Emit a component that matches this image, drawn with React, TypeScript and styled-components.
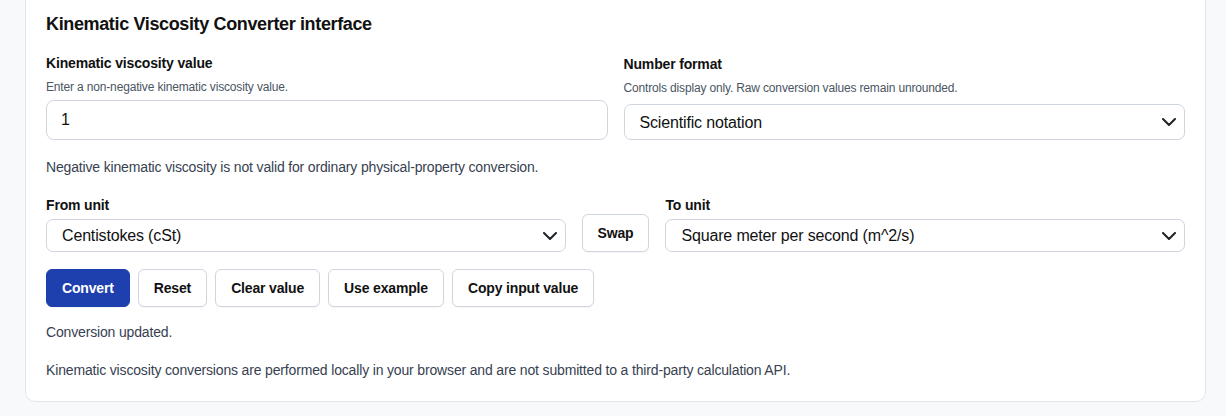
import React, { useState } from "react";
import styled, { createGlobalStyle } from "styled-components";

const GlobalStyle = createGlobalStyle`
  html, body {
    margin: 0;
    padding: 0;
    background: #f8f9fb;
    font-family: "Liberation Sans", Arial, sans-serif;
    letter-spacing: -0.01em;
    color: #111827;
  }
  * {
    box-sizing: border-box;
  }
`;

const units = [
  "Centistokes (cSt)",
  "Stokes (St)",
  "Square meter per second (m^2/s)",
  "Square millimeter per second (mm^2/s)",
  "Square foot per second (ft^2/s)",
];

const Chevron: React.FC = () => (
  <ChevronSvg viewBox="0 0 14 8" width="14" height="8">
    <path
      d="M1 1l6 6 6-6"
      fill="none"
      stroke="#1f2328"
      strokeWidth="2"
      strokeLinecap="round"
      strokeLinejoin="round"
    />
  </ChevronSvg>
);

type SelectProps = {
  value: string;
  options: string[];
  height: number;
  onChange: (v: string) => void;
};

const SelectBox: React.FC<SelectProps> = ({ value, options, height, onChange }) => (
  <SelectWrap>
    <StyledSelect
      $height={height}
      value={value}
      onChange={(e) => onChange(e.target.value)}
    >
      {options.map((o) => (
        <option key={o}>{o}</option>
      ))}
    </StyledSelect>
    <Chevron />
  </SelectWrap>
);

export default function App() {
  const [value, setValue] = useState("1");
  const [format, setFormat] = useState("Scientific notation");
  const [from, setFrom] = useState(units[0]);
  const [to, setTo] = useState(units[2]);

  const swap = () => {
    setFrom(to);
    setTo(from);
  };

  return (
    <Page>
      <GlobalStyle />
      <Card>
        <Title>Kinematic Viscosity Converter interface</Title>

        <TopGrid>
          <Field>
            <Label>Kinematic viscosity value</Label>
            <Help $gap={5}>Enter a non-negative kinematic viscosity value.</Help>
            <TextInput value={value} onChange={(e) => setValue(e.target.value)} />
          </Field>
          <Field>
            <Label>Number format</Label>
            <Help $gap={8}>
              Controls display only. Raw conversion values remain unrounded.
            </Help>
            <SelectBox
              value={format}
              height={36}
              options={["Scientific notation", "Fixed decimals", "Plain number"]}
              onChange={setFormat}
            />
          </Field>
        </TopGrid>

        <Note>
          Negative kinematic viscosity is not valid for ordinary physical-property
          conversion.
        </Note>

        <UnitGrid>
          <Field>
            <Label $gap={5}>From unit</Label>
            <SelectBox value={from} height={33} options={units} onChange={setFrom} />
          </Field>
          <Button onClick={swap}>Swap</Button>
          <Field>
            <Label $gap={5}>To unit</Label>
            <SelectBox value={to} height={33} options={units} onChange={setTo} />
          </Field>
        </UnitGrid>

        <Actions>
          <Button $primary>Convert</Button>
          <Button onClick={() => setValue("1")}>Reset</Button>
          <Button onClick={() => setValue("")}>Clear value</Button>
          <Button onClick={() => setValue("1")}>Use example</Button>
          <Button>Copy input value</Button>
        </Actions>

        <Status>Conversion updated.</Status>
        <Disclaimer>
          Kinematic viscosity conversions are performed locally in your browser and
          are not submitted to a third-party calculation API.
        </Disclaimer>
      </Card>
    </Page>
  );
}

const Page = styled.div`
  padding: 0 20px 15px 25px;
  min-height: 416px;
  overflow: hidden;
`;

const Card = styled.section`
  margin-top: -10px;
  background: #ffffff;
  border: 1px solid #e3e7ed;
  border-radius: 10px;
  padding: 22px 20px 22px 20px;
`;

const Title = styled.h2`
  margin: 0;
  font-size: 18px;
  line-height: 22px;
  font-weight: 700;
  letter-spacing: -0.02em;
  color: #111111;
`;

const TopGrid = styled.div`
  display: grid;
  grid-template-columns: 1fr 1fr;
  column-gap: 16px;
  align-items: end;
  margin-top: 19px;
`;

const Field = styled.div`
  display: flex;
  flex-direction: column;
  min-width: 0;
`;

const Label = styled.label<{ $gap?: number }>`
  font-size: 14px;
  line-height: 18px;
  font-weight: 700;
  color: #111111;
  margin-bottom: ${({ $gap }) => $gap ?? 7}px;
`;

const Help = styled.div<{ $gap: number }>`
  font-size: 12px;
  line-height: 16px;
  color: #4b5563;
  margin-bottom: ${({ $gap }) => $gap}px;
`;

const TextInput = styled.input`
  height: 40px;
  width: 100%;
  border: 1px solid #cfd6df;
  border-radius: 8px;
  padding: 0 14px;
  font-family: inherit;
  font-size: 16px;
  letter-spacing: inherit;
  color: #111111;
  background: #ffffff;
  outline: none;
`;

const SelectWrap = styled.div`
  position: relative;
  width: 100%;
`;

const StyledSelect = styled.select<{ $height: number }>`
  appearance: none;
  -webkit-appearance: none;
  width: 100%;
  height: ${({ $height }) => $height}px;
  border: 1px solid #cfd6df;
  border-radius: 7px;
  padding: 0 40px 0 15px;
  font-family: inherit;
  font-size: 16px;
  letter-spacing: inherit;
  color: #111111;
  background: #ffffff;
  outline: none;
`;

const ChevronSvg = styled.svg`
  position: absolute;
  right: 9px;
  top: 50%;
  transform: translateY(-50%);
  pointer-events: none;
`;

const Note = styled.p`
  margin: 18px 0 0;
  font-size: 14px;
  line-height: 18px;
  color: #374151;
`;

const UnitGrid = styled.div`
  display: grid;
  grid-template-columns: 1fr auto 1fr;
  column-gap: 16px;
  align-items: end;
  margin-top: 20px;
`;

const Button = styled.button<{ $primary?: boolean }>`
  height: 38px;
  padding: 0 15px;
  border-radius: 6px;
  border: 1px solid ${({ $primary }) => ($primary ? "#1e40af" : "#cfd6df")};
  background: ${({ $primary }) => ($primary ? "#1e40af" : "#ffffff")};
  color: ${({ $primary }) => ($primary ? "#ffffff" : "#111111")};
  font-family: inherit;
  font-size: 14px;
  font-weight: 700;
  letter-spacing: inherit;
  cursor: pointer;
  box-shadow: 0 1px 1px rgba(15, 23, 42, 0.04);
`;

const Actions = styled.div`
  display: flex;
  gap: 8px;
  margin-top: 17px;
`;

const Status = styled.p`
  margin: 16px 0 0;
  font-size: 14px;
  line-height: 18px;
  color: #374151;
`;

const Disclaimer = styled.p`
  margin: 20px 0 0;
  font-size: 14px;
  line-height: 18px;
  color: #374151;
`;
